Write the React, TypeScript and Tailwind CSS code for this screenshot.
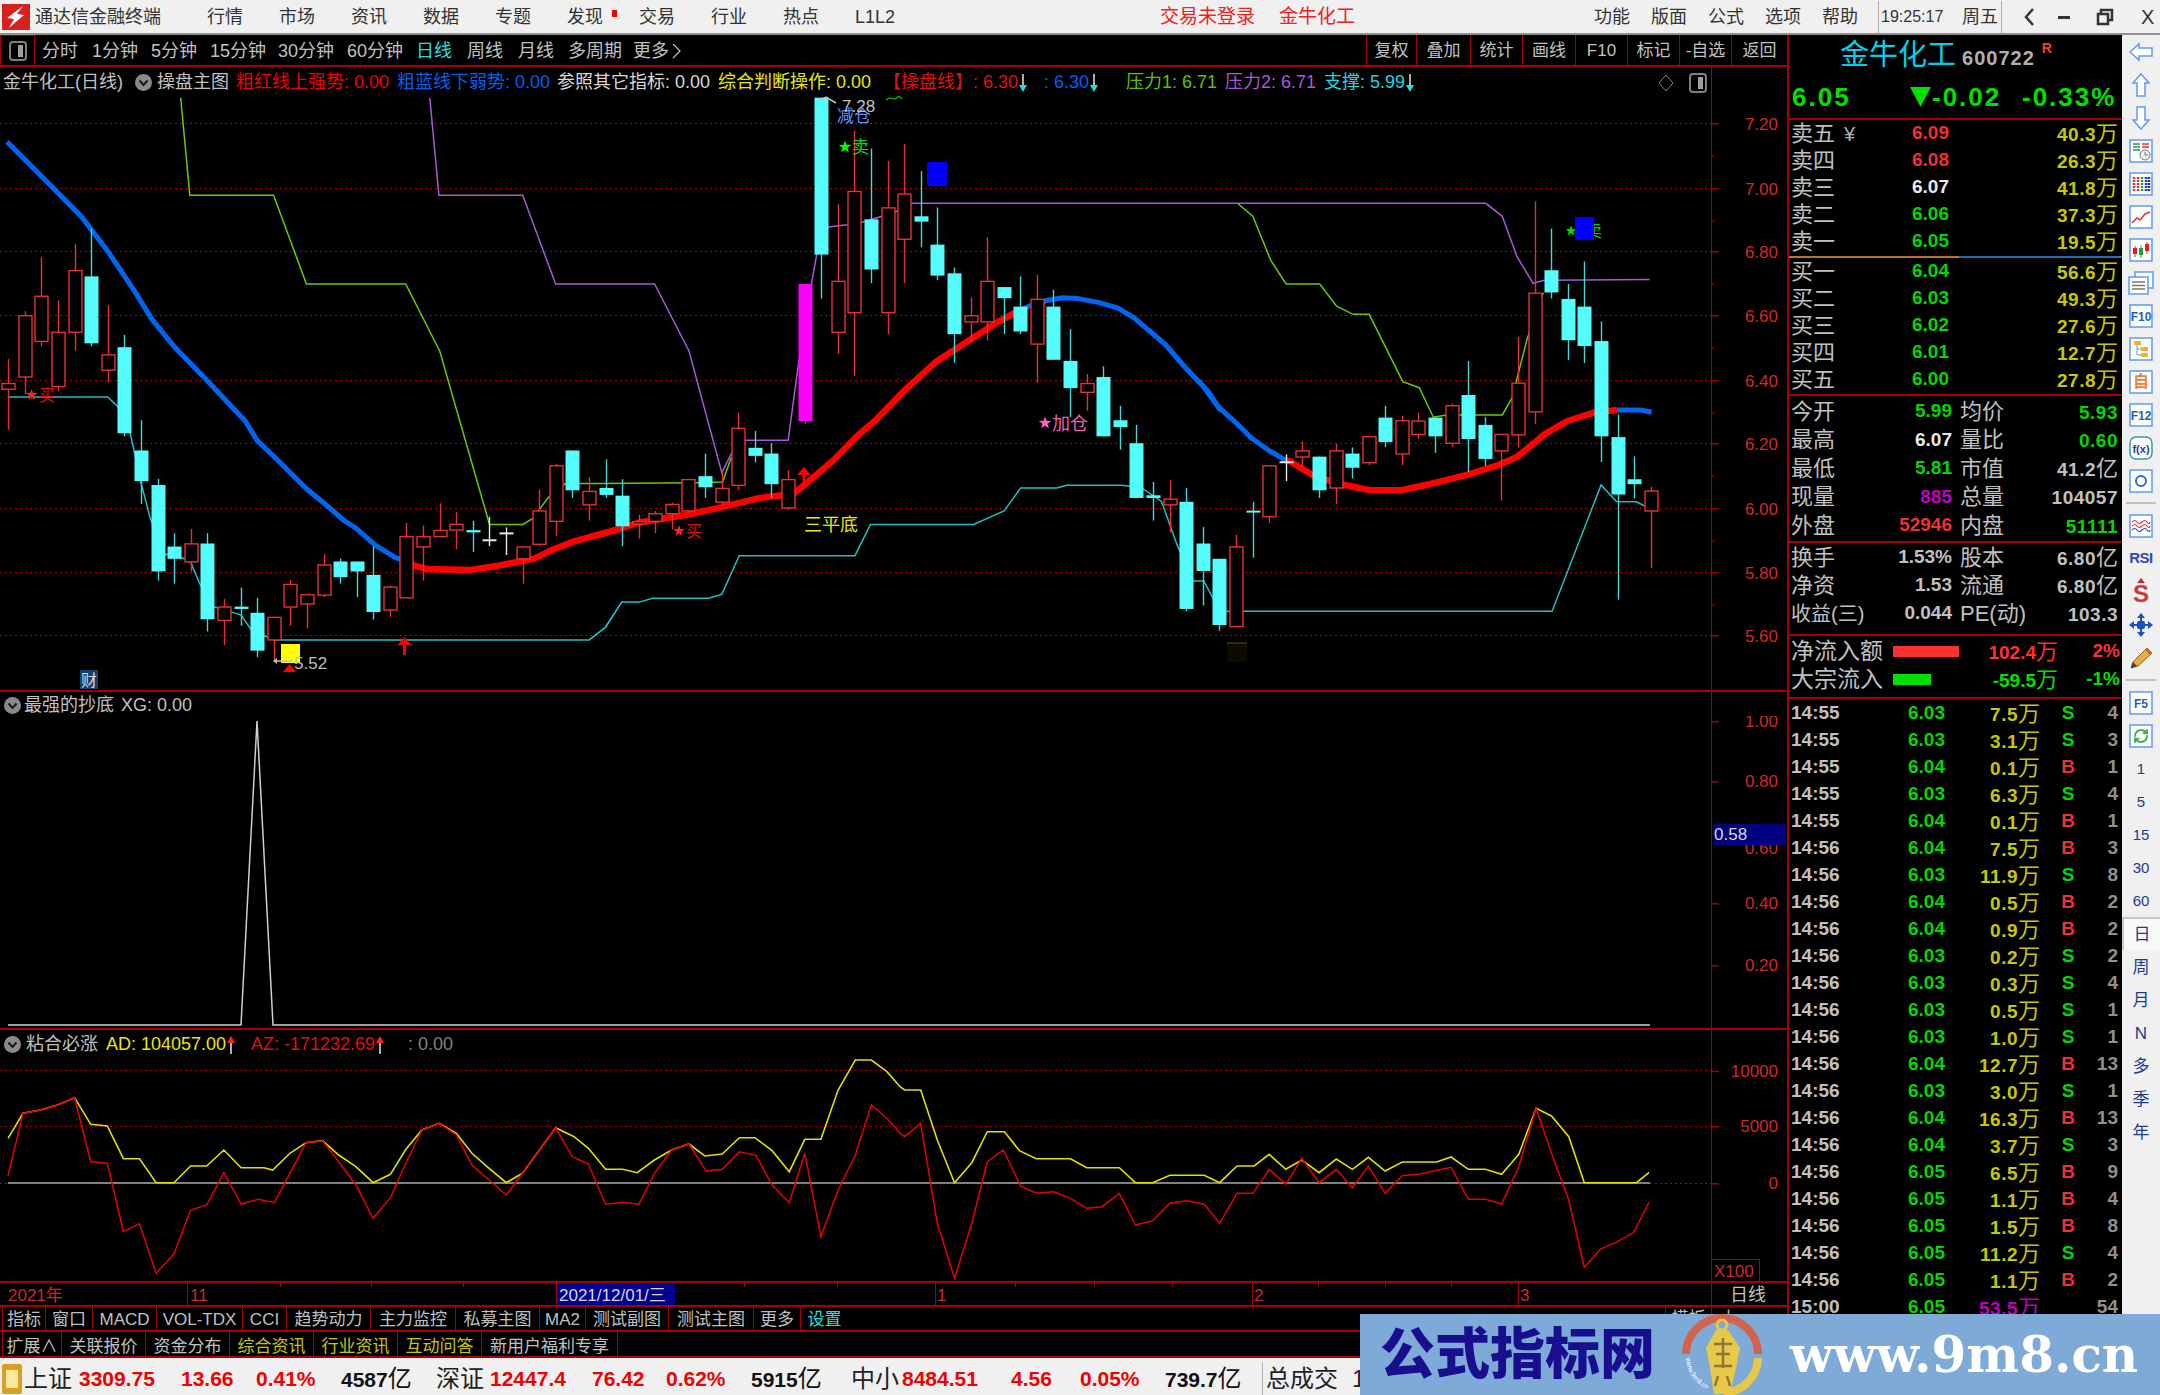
import { RefreshCw } from "lucide-react";
import type { ReactNode } from "react";

// chart coordinates are read off zoomed crops, so keep the crop scale here
const sy = 2.613;
const toPts = (x0: number, sx: number, a: number[]) => {
  const out: string[] = [];
  for (let i = 0; i < a.length; i += 2) {
    out.push(`${(x0 + a[i] / sx).toFixed(1)},${(90 + a[i + 1] / sy).toFixed(1)}`);
  }
  return out.join(" ");
};
const z7 = (a: number[]) => toPts(0, 2.529, a);
const z8 = (a: number[]) => toPts(600, 2.529, a);
const z9 = (a: number[]) => toPts(1200, 2.613, a);
const subA = (a: number[]) => {
  const out: string[] = [];
  for (let i = 0; i < a.length; i += 2) out.push(`${(a[i] / 1.742).toFixed(1)},${(1030 + a[i + 1] / 3).toFixed(1)}`);
  return out.join(" ");
};
const subB = (a: number[]) => {
  const out: string[] = [];
  for (let i = 0; i < a.length; i += 2) out.push(`${(900 + a[i] / 1.742).toFixed(1)},${(1030 + a[i + 1] / 3).toFixed(1)}`);
  return out.join(" ");
};

const candles: [string, number, number, number, number][] = [
  ["r", 767, 782, 703, 888], ["r", 590, 750, 578, 795], ["r", 539, 657, 437, 670], ["r", 633, 775, 550, 787],
  ["r", 472, 633, 402, 681], ["c", 487, 662, 362, 670], ["r", 692, 732, 562, 763], ["c", 672, 897, 640, 905],
  ["c", 942, 1022, 863, 1082], ["c", 1032, 1258, 1016, 1282], ["c", 1193, 1225, 1158, 1290], ["r", 1186, 1233, 1147, 1258],
  ["c", 1185, 1383, 1158, 1415], ["r", 1351, 1386, 1330, 1450], ["c", 1350, 1356, 1300, 1400], ["c", 1366, 1465, 1327, 1482],
  ["r", 1378, 1437, 1378, 1490], ["r", 1292, 1351, 1280, 1400], ["r", 1319, 1343, 1315, 1407], ["r", 1241, 1320, 1213, 1325],
  ["c", 1232, 1273, 1224, 1290], ["c", 1232, 1258, 1232, 1325], ["c", 1267, 1364, 1193, 1384], ["r", 1299, 1359, 1295, 1376],
  ["r", 1167, 1327, 1131, 1327], ["r", 1167, 1194, 1138, 1282], ["r", 1151, 1167, 1080, 1167], ["r", 1135, 1150, 1103, 1200],
  ["c", 1150, 1156, 1126, 1207], ["w", 1174, 1178, 1115, 1192], ["w", 1156, 1160, 1143, 1215], ["r", 1194, 1225, 1194, 1290],
  ["r", 1100, 1187, 1045, 1192], ["r", 982, 1127, 977, 1165], ["c", 942, 1046, 942, 1066], ["r", 1049, 1084, 1012, 1125],
  ["c", 1040, 1058, 965, 1066], ["c", 1060, 1140, 1017, 1192], ["r", 1128, 1134, 1110, 1172], ["r", 1107, 1127, 1100, 1158],
  ["r", 1083, 1107, 1078, 1148], ["r", 1018, 1100, 1018, 1105], ["c", 1009, 1038, 950, 1066], ["r", 1041, 1077, 995, 1085],
  ["r", 884, 1033, 843, 1046], ["c", 935, 956, 891, 973], ["c", 950, 1030, 923, 1066], ["r", 1018, 1092, 993, 1098],
  ["m", 507, 865, 507, 873], ["c", 20, 430, 20, 545], ["r", 500, 633, 298, 690], ["r", 265, 582, 107, 748],
  ["c", 338, 469, 153, 505], ["r", 308, 582, 185, 638], ["r", 272, 390, 141, 505], ["c", 330, 344, 212, 411],
  ["c", 404, 485, 307, 497], ["c", 479, 638, 464, 713], ["r", 590, 606, 542, 660], ["r", 500, 606, 385, 655],
  ["c", 515, 544, 515, 638], ["c", 566, 631, 487, 638], ["r", 547, 664, 483, 765], ["c", 566, 705, 522, 705],
  ["c", 708, 779, 625, 855], ["r", 767, 790, 742, 838], ["c", 750, 905, 722, 905], ["c", 863, 881, 825, 940],
  ["c", 923, 1066, 875, 1066], ["c", 1059, 1066, 1024, 1125], ["r", 1069, 1084, 1020, 1156], ["c", 1076, 1356, 1040, 1362],
  ["c", 1185, 1257, 1142, 1347], ["c", 1225, 1398, 1225, 1413], ["r", 1194, 1402, 1162, 1402], ["c", 1099, 1104, 1076, 1222],
  ["r", 982, 1115, 982, 1132], ["w", 970, 974, 952, 1022], ["r", 943, 959, 918, 985], ["c", 958, 1046, 958, 1066],
  ["r", 943, 1040, 925, 1082], ["c", 950, 987, 934, 1015], ["r", 906, 974, 906, 980], ["c", 856, 920, 825, 933],
  ["r", 864, 951, 852, 980], ["r", 865, 900, 843, 912], ["c", 856, 905, 856, 948], ["r", 825, 923, 820, 933],
  ["c", 797, 912, 708, 998], ["c", 875, 964, 855, 982], ["r", 900, 943, 900, 1073], ["r", 766, 901, 645, 933],
  ["r", 531, 841, 291, 873], ["c", 471, 529, 362, 545], ["c", 546, 654, 507, 706], ["c", 566, 669, 448, 713],
  ["c", 656, 905, 605, 972], ["c", 907, 1057, 848, 1332], ["c", 1017, 1030, 957, 1067], ["r", 1048, 1100, 1037, 1250],
];

const grid = [123.5, 188.5, 251.5, 315.5, 380.5, 443.5, 508.5, 572.5, 635.5];
const priceLabels = ["7.20", "7.00", "6.80", "6.60", "6.40", "6.20", "6.00", "5.80", "5.60"];

const blueLines = [
  z7([18, 135, 140, 262, 205, 330, 275, 425, 340, 525, 385, 600, 440, 670, 520, 755, 570, 810, 620, 865, 650, 915, 700, 965, 775, 1042, 820, 1080, 870, 1125, 900, 1145, 950, 1190, 1000, 1222, 1012, 1226]),
  z8([1050, 582, 1085, 565, 1130, 550, 1170, 543, 1210, 545, 1260, 555, 1310, 570, 1350, 595, 1430, 665, 1480, 725, 1540, 790, 1568, 835]) + " " + z9([0, 763, 50, 830, 100, 875, 135, 910, 180, 942, 225, 968]),
  z9([1090, 836, 1150, 836, 1180, 842]),
];
const redLines = [
  z7([1012, 1226, 1040, 1240, 1080, 1252, 1190, 1254, 1260, 1243, 1350, 1225, 1400, 1200, 1450, 1180, 1520, 1160, 1568, 1147]) + " " + z8([0, 1162, 100, 1130, 220, 1110, 300, 1092, 400, 1067, 490, 1055, 530, 1020, 590, 968, 650, 905, 700, 860, 770, 785, 850, 710, 940, 650, 1000, 610, 1050, 582]),
  z9([225, 968, 235, 970, 300, 1010, 370, 1030, 440, 1045, 525, 1046, 600, 1030, 700, 1005, 780, 980, 830, 958, 900, 900, 960, 865, 1030, 843, 1090, 836]),
];
const greenLines = [
  z7([457, 20, 480, 275, 692, 275, 775, 507, 1026, 507, 1112, 682, 1238, 1135, 1322, 1135, 1347, 1120, 1388, 1063, 1430, 1028, 1568, 1028]) + " " + z8([0, 1028, 240, 1026, 310, 1024, 332, 960]),
  z9([100, 298, 138, 330, 185, 445, 225, 507, 313, 507, 357, 565, 400, 586, 442, 586, 530, 762, 573, 778, 610, 855, 640, 850, 680, 849, 790, 849, 815, 805, 855, 650, 897, 530]),
];
const purpleLine = z7([1087, 20, 1110, 275, 1322, 275, 1405, 507, 1568, 507]) + " " + z8([138, 507, 225, 682, 308, 1000, 332, 950, 367, 915, 476, 915, 500, 730, 535, 505, 548, 430, 578, 358, 625, 352, 660, 346, 745, 320, 785, 296, 1568, 296]) + " " + z9([747, 296, 790, 330, 828, 435, 870, 505, 900, 497, 1175, 495]);
const tealLine = z7([22, 802, 272, 802, 296, 825, 330, 900, 355, 1020, 380, 1120, 414, 1212, 480, 1228, 505, 1290, 540, 1350, 610, 1372, 635, 1410, 692, 1437, 1490, 1437, 1530, 1405, 1568, 1345]) + " " + z8([14, 1405, 55, 1338, 100, 1338, 133, 1328, 275, 1328, 308, 1318, 352, 1217, 645, 1217, 684, 1135, 945, 1135, 1022, 1100, 1064, 1040, 1155, 1040, 1180, 1033, 1320, 1033, 1370, 1040, 1420, 1075, 1460, 1190, 1500, 1283, 1527, 1283]) + " " + z9([35, 1330, 50, 1362, 920, 1362, 1048, 1032, 1088, 1075, 1140, 1076, 1178, 1095]);

const yellowSub = subA([14, 325, 40, 250, 70, 240, 100, 225, 130, 203, 158, 283, 187, 288, 215, 386, 243, 386, 272, 458, 303, 458, 332, 408, 360, 408, 390, 360, 420, 413, 460, 413, 475, 420, 505, 370, 533, 338, 562, 332, 590, 375, 620, 410, 650, 458, 680, 433, 707, 358, 735, 300, 765, 280, 795, 310, 822, 370, 852, 415, 882, 458, 910, 430, 968, 293, 1000, 320, 1025, 355, 1055, 418, 1085, 418, 1110, 428, 1140, 390, 1170, 360, 1200, 342, 1228, 378, 1258, 372, 1288, 323, 1315, 323, 1345, 362, 1375, 425, 1402, 328, 1430, 328, 1460, 180, 1490, 90, 1518, 90, 1545, 125, 1568, 170]) + " " + subB([8, 180, 36, 180, 65, 330, 95, 458, 125, 398, 152, 305, 182, 305, 208, 362, 237, 386, 297, 386, 325, 413, 382, 413, 410, 458, 440, 458, 470, 436, 530, 436, 557, 458, 587, 408, 617, 408, 643, 373, 672, 418, 700, 390, 730, 428, 760, 387, 788, 418, 816, 382, 845, 423, 875, 396, 935, 396, 960, 381, 990, 418, 1020, 418, 1048, 433, 1078, 373, 1108, 235, 1135, 258, 1165, 320, 1192, 458, 1283, 458, 1305, 427]);
const redSub = subA([14, 438, 40, 250, 70, 240, 100, 225, 130, 203, 158, 395, 187, 400, 215, 605, 243, 581, 272, 730, 303, 672, 332, 540, 360, 525, 390, 428, 420, 522, 450, 508, 478, 518, 505, 430, 533, 338, 562, 332, 590, 395, 620, 465, 650, 565, 680, 503, 707, 400, 735, 300, 765, 280, 795, 315, 822, 405, 852, 450, 882, 495, 910, 430, 968, 293, 997, 380, 1025, 402, 1055, 523, 1085, 517, 1113, 523, 1140, 430, 1170, 360, 1200, 342, 1230, 423, 1258, 418, 1288, 365, 1317, 376, 1345, 465, 1375, 518, 1402, 370, 1430, 620, 1460, 480, 1490, 375, 1518, 225, 1545, 265, 1568, 310]) + " " + subB([8, 320, 36, 280, 65, 580, 95, 745, 125, 580, 152, 395, 180, 360, 210, 468, 237, 490, 268, 485, 297, 505, 325, 535, 352, 530, 382, 490, 410, 585, 440, 572, 470, 520, 500, 512, 530, 523, 557, 580, 587, 490, 615, 490, 643, 418, 672, 463, 700, 385, 730, 458, 760, 418, 788, 473, 816, 408, 845, 490, 875, 437, 905, 432, 960, 412, 990, 508, 1020, 508, 1048, 522, 1078, 410, 1108, 235, 1135, 370, 1165, 510, 1192, 712, 1220, 658, 1250, 635, 1278, 607, 1305, 517]);

const periods = [
  { t: "分时", w: "w-[50px]" }, { t: "1分钟", w: "w-[59px]" }, { t: "5分钟", w: "w-[59px]" }, { t: "15分钟", w: "w-[68px]" },
  { t: "30分钟", w: "w-[69px]" }, { t: "60分钟", w: "w-[69px]" }, { t: "日线", w: "w-[51px] text-[#22e0e0]" }, { t: "周线", w: "w-[51px]" },
  { t: "月线", w: "w-[50px]" }, { t: "多周期", w: "w-[65px]" },
];
const tools = [
  { t: "复权", w: "w-[50px]" }, { t: "叠加", w: "w-[54px]" }, { t: "统计", w: "w-[52px]" }, { t: "画线", w: "w-[53px]" },
  { t: "F10", w: "w-[52px]" }, { t: "标记", w: "w-[52px]" }, { t: "-自选", w: "w-[52px]" }, { t: "返回", w: "w-[56px]" },
];
const menus = ["行情", "市场", "资讯", "数据", "专题", "发现", "交易", "行业", "热点", "L1L2"];
const rightMenus = ["功能", "版面", "公式", "选项", "帮助"];

const asks = [
  ["卖五", "6.09", "40.3", "text-[#f03030]"], ["卖四", "6.08", "26.3", "text-[#f03030]"], ["卖三", "6.07", "41.8", "text-[#e8e8e8]"],
  ["卖二", "6.06", "37.3", "text-[#00d800]"], ["卖一", "6.05", "19.5", "text-[#00d800]"],
];
const bids = [
  ["买一", "6.04", "56.6"], ["买二", "6.03", "49.3"], ["买三", "6.02", "27.6"], ["买四", "6.01", "12.7"], ["买五", "6.00", "27.8"],
];
const quoteA = [
  ["今开", "5.99", "text-[#00d800]", "均价", "5.93", "", "text-[#00d800]"],
  ["最高", "6.07", "text-[#e8e8e8]", "量比", "0.60", "", "text-[#00d800]"],
  ["最低", "5.81", "text-[#00d800]", "市值", "41.2", "亿", "text-[#c0c0c0]"],
  ["现量", "885", "text-[#c000c0]", "总量", "104057", "", "text-[#c0c0c0]"],
  ["外盘", "52946", "text-[#f03030]", "内盘", "51111", "", "text-[#00d800]"],
];
const quoteB = [
  ["换手", "1.53%", "股本", "6.80", "亿"],
  ["净资", "1.53", "流通", "6.80", "亿"],
  ["收益(三)", "0.044", "PE(动)", "103.3", ""],
];
const trades: [string, string, string, string, string][] = [
  ["14:55", "6.03", "7.5", "S", "4"], ["14:55", "6.03", "3.1", "S", "3"], ["14:55", "6.04", "0.1", "B", "1"], ["14:55", "6.03", "6.3", "S", "4"],
  ["14:55", "6.04", "0.1", "B", "1"], ["14:56", "6.04", "7.5", "B", "3"], ["14:56", "6.03", "11.9", "S", "8"], ["14:56", "6.04", "0.5", "B", "2"],
  ["14:56", "6.04", "0.9", "B", "2"], ["14:56", "6.03", "0.2", "S", "2"], ["14:56", "6.03", "0.3", "S", "4"], ["14:56", "6.03", "0.5", "S", "1"],
  ["14:56", "6.03", "1.0", "S", "1"], ["14:56", "6.04", "12.7", "B", "13"], ["14:56", "6.03", "3.0", "S", "1"], ["14:56", "6.04", "16.3", "B", "13"],
  ["14:56", "6.04", "3.7", "S", "3"], ["14:56", "6.05", "6.5", "B", "9"], ["14:56", "6.05", "1.1", "B", "4"], ["14:56", "6.05", "1.5", "B", "8"],
  ["14:56", "6.05", "11.2", "S", "4"], ["14:56", "6.05", "1.1", "B", "2"], ["15:00", "6.05", "53.5", "", "54"],
];
const tabsA = [
  { t: "指标", w: "w-[43px]" }, { t: "窗口", w: "w-[47px]" }, { t: "MACD", w: "w-[64px]" }, { t: "VOL-TDX", w: "w-[86px]" }, { t: "CCI", w: "w-[44px]" },
  { t: "趋势动力", w: "w-[84px]" }, { t: "主力监控", w: "w-[85px]" }, { t: "私募主图", w: "w-[84px]" }, { t: "MA2", w: "w-[46px]" },
  { t: "测试副图", w: "w-[83px]" }, { t: "测试主图", w: "w-[85px]" }, { t: "更多", w: "w-[47px]" }, { t: "设置", w: "w-[48px] text-[#22e0e0]" },
];
const tabsB = [
  { t: "扩展∧", w: "w-[59px]" }, { t: "关联报价", w: "w-[84px]" }, { t: "资金分布", w: "w-[84px]" }, { t: "综合资讯", w: "w-[84px] text-[#c8c800]" },
  { t: "行业资讯", w: "w-[84px] text-[#c8c800]" }, { t: "互动问答", w: "w-[84px] text-[#c8c800]" }, { t: "新用户福利专享", w: "w-[137px]" },
];

const Star = ({ x, y, r, fill }: { x: number; y: number; r: number; fill: string }) => {
  const p: string[] = [];
  for (let i = 0; i < 10; i++) {
    const a = -Math.PI / 2 + (i * Math.PI) / 5;
    const rr = i % 2 ? r * 0.42 : r;
    p.push(`${(x + rr * Math.cos(a)).toFixed(1)},${(y + rr * Math.sin(a)).toFixed(1)}`);
  }
  return <polygon points={p.join(" ")} fill={fill} />;
};

const UpMark = ({ x, y }: { x: number; y: number }) => (
  <g fill="#ff0000">
    <polygon points={`${x},${y} ${x + 7},${y + 8} ${x - 7},${y + 8}`} />
    <rect x={x - 1.5} y={y + 8} width={3} height={10} />
  </g>
);

const Dotted = ({ y }: { y: number }) => (
  <line x1={0} x2={1711} y1={y} y2={y} stroke="#c00000" strokeWidth={1} strokeDasharray="2 3" shapeRendering="crispEdges" />
);

const MainChart = () => (
  <svg width={1787} height={594} viewBox="0 96 1787 594" className="block">
    {grid.map((y) => (
      <Dotted key={y} y={y} />
    ))}
    <polyline points={greenLines[0]} fill="none" stroke="#66cc00" strokeWidth={1.5} />
    <polyline points={greenLines[1]} fill="none" stroke="#66cc00" strokeWidth={1.5} />
    <polyline points={purpleLine} fill="none" stroke="#a858d8" strokeWidth={1.5} />
    <polyline points={tealLine} fill="none" stroke="#20c0c8" strokeWidth={1.5} />
    {blueLines.map((p, i) => (
      <polyline key={i} points={p} fill="none" stroke="#0066f0" strokeWidth={5} strokeLinejoin="round" />
    ))}
    {redLines.map((p, i) => (
      <polyline key={i} points={p} fill="none" stroke="#ff0000" strokeWidth={6.5} strokeLinejoin="round" />
    ))}
    {candles.map(([t, top, bot, hi, lo], i) => {
      const x = Math.round(8.3 + 16.59 * i) + 0.5;
      const y = (v: number) => 90 + v / sy;
      const color = t === "r" ? "#e83030" : t === "w" ? "#e8e8e8" : t === "m" ? "#ff00ff" : "#54fcfc";
      const wick = t === "c" ? "#40d8d8" : color;
      return (
        <g key={i}>
          <line x1={x} x2={x} y1={y(hi)} y2={y(lo)} stroke={wick} strokeWidth={1.4} />
          {t === "r" ? (
            <rect x={x - 6.5} y={y(top)} width={13} height={y(bot) - y(top)} fill="#000" stroke={color} strokeWidth={1.4} />
          ) : (
            <rect x={x - 7} y={y(top)} width={14} height={Math.max(y(bot) - y(top), 2)} fill={color} />
          )}
        </g>
      );
    })}
    <rect x={1711} y={96} width={1} height={594} fill="#a80000" />
    {grid.map((y, i) => (
      <g key={y}>
        <rect x={1711} y={y - 0.5} width={8} height={1.5} fill="#a80000" />
        {i < 8 && <rect x={1711} y={y + 32} width={4} height={1} fill="#a80000" />}
        <text x={1778} y={y + 6} textAnchor="end" fontSize={17} fill="#d02828">{priceLabels[i]}</text>
      </g>
    ))}

    {/* signal marks */}
    <Star x={31.6} y={395} r={6} fill="#ff2020" />
    <text x={39} y={401} fontSize={16} fill="#e01010">买</text>
    <Star x={679} y={531} r={6} fill="#ff2020" />
    <text x={686} y={537} fontSize={16} fill="#e01010">买</text>
    <rect x={281} y={644} width={19} height={19} fill="#ffff00" />
    <line x1={274} x2={292} y1={661} y2={661} stroke="#c0c0c0" strokeWidth={1.5} />
    <polygon points="273,661 277,658 277,664" fill="#c0c0c0" />
    <text x={294} y={669} fontSize={17} fill="#c0c0c0">5.52</text>
    <polygon points="289.5,664 296,672 283,672" fill="#ff0000" />
    <UpMark x={404.5} y={637} />
    <UpMark x={804} y={467} />
    <rect x={80} y={670} width={18} height={19} fill="#16406e" />
    <text x={81} y={686} fontSize={16} fill="#d8d8d8">财</text>
    <text x={804} y={531} fontSize={18} fill="#e8e800">三平底</text>
    <rect x={927} y={162} width={20} height={24} fill="#0000ff" />
    <text x={837} y={122} fontSize={17} fill="#6090f0">减仓</text>
    <polyline points="822,99 826,97 836,103" fill="none" stroke="#c0c0c0" strokeWidth={1.5} />
    <text x={842} y={112} fontSize={17} fill="#c0c0c0">7.28</text>
    <polyline points="886,100 890,98 895,99 899,96 902,99" fill="none" stroke="#00c000" strokeWidth={1.2} />
    <Star x={845} y={147} r={6.5} fill="#00ff00" />
    <text x={852} y={153} fontSize={17} fill="#00e000">卖</text>
    <Star x={1045} y={423} r={6.5} fill="#ff60c0" />
    <text x={1052} y={430} fontSize={18} fill="#f060b0">加仓</text>
    <Star x={1571} y={231} r={5.5} fill="#00e000" />
    <text x={1585} y={237} fontSize={17} fill="#00d800">卖</text>
    <rect x={1575} y={217} width={19} height={23} fill="#0000ff" />
    <rect x={1227} y={643} width={20} height={19} fill="#0b0b00" />
    <line x1={1227} x2={1247} y1={643} y2={643} stroke="#5a5400" strokeWidth={1} />
  </svg>
);

const SpikeChart = () => (
  <svg width={1787} height={312} viewBox="0 716 1787 312" className="block">
    <polyline points="8,1025 241,1025 257,721 273,1025 1650,1025" fill="none" stroke="#d0d0d0" strokeWidth={1.5} />
    <rect x={1711} y={716} width={1} height={312} fill="#a80000" />
    {[
      [721, "1.00"],
      [781, "0.80"],
      [903, "0.40"],
      [965, "0.20"],
    ].map(([y, t]) => (
      <g key={t}>
        <rect x={1711} y={Number(y)} width={8} height={1.5} fill="#a80000" />
        <text x={1778} y={Number(y) + 6} textAnchor="end" fontSize={17} fill="#d02828">{t}</text>
      </g>
    ))}
    <text x={1778} y={854} textAnchor="end" fontSize={17} fill="#d02828">0.60</text>
    <rect x={1713} y={824} width={73} height={21} fill="#000080" />
    <text x={1714} y={840} fontSize={17} fill="#d8d8d8">0.58</text>
  </svg>
);

const OscChart = () => (
  <svg width={1787} height={224} viewBox="0 1058 1787 224" className="block">
    {[1070.5, 1126.5, 1183.5].map((y) => (
      <Dotted key={y} y={y} />
    ))}
    <line x1={8} x2={1650} y1={1183} y2={1183} stroke="#808080" strokeWidth={2} />
    <polyline points={yellowSub} fill="none" stroke="#e0e000" strokeWidth={1.6} />
    <polyline points={redSub} fill="none" stroke="#e80000" strokeWidth={1.5} />
    <rect x={1711} y={1058} width={1} height={224} fill="#a80000" />
    {[
      [1070.7, "10000"],
      [1126, "5000"],
      [1183, "0"],
    ].map(([y, t]) => (
      <g key={t}>
        <rect x={1711} y={Number(y)} width={8} height={1.5} fill="#a80000" />
        <text x={1778} y={Number(y) + 6} textAnchor="end" fontSize={17} fill="#d02828">{t}</text>
      </g>
    ))}
    <rect x={1711.5} y={1259.5} width={48} height={22} fill="#000" stroke="#a80000" />
    <text x={1714} y={1277} fontSize={17} fill="#d02828">X100</text>
  </svg>
);

const DateAxis = () => (
  <svg width={1787} height={22} viewBox="0 1283 1787 22" className="block">
    <text x={8} y={1301} fontSize={17} fill="#d02828">2021年</text>
    {[187, 556, 935, 1252, 1518].map((x) => (
      <rect key={x} x={x} y={1283} width={1} height={22} fill="#a80000" />
    ))}
    {[280, 371, 463, 744, 837, 1015, 1094, 1172, 1318, 1385, 1451].map((x) => (
      <rect key={x} x={x} y={1283} width={1} height={4} fill="#a80000" />
    ))}
    <text x={190} y={1301} fontSize={17} fill="#d02828">11</text>
    <rect x={557} y={1283} width={118} height={22} fill="#000090" />
    <text x={559} y={1301} fontSize={17} fill="#d8d8d8">2021/12/01/三</text>
    <text x={937} y={1301} fontSize={17} fill="#d02828">1</text>
    <text x={1254} y={1301} fontSize={17} fill="#d02828">2</text>
    <text x={1520} y={1301} fontSize={17} fill="#d02828">3</text>
    <rect x={1711} y={1283} width={1} height={22} fill="#a80000" />
    <text x={1730} y={1301} fontSize={18} fill="#c0c0c0">日线</text>
  </svg>
);

const Chevron = () => (
  <svg width={17} height={17} viewBox="0 0 17 17" className="shrink-0">
    <circle cx={8.5} cy={8.5} r={8.5} fill="#8a8a8a" />
    <polyline points="4.5,6.5 8.5,11 12.5,6.5" fill="none" stroke="#1a1a1a" strokeWidth={2} />
  </svg>
);

const DownTick = () => (
  <svg width={10} height={20} viewBox="0 0 10 20" className="inline-block align-middle">
    <line x1={5} x2={5} y1={1} y2={14} stroke="#e8e8e8" strokeWidth={1.5} />
    <polygon points="1,12 9,12 5,19" fill="#20e0e8" />
  </svg>
);

const UpTick = () => (
  <svg width={10} height={20} viewBox="0 0 10 20" className="inline-block align-middle">
    <line x1={5} x2={5} y1={6} y2={19} stroke="#e8e8e8" strokeWidth={1.5} />
    <polygon points="1,8 9,8 5,1" fill="#ff2020" />
  </svg>
);

const PanelIcon = () => (
  <svg width={18} height={20} viewBox="0 0 18 20">
    <rect x={1} y={1} width={16} height={18} rx={3} fill="none" stroke="#808080" strokeWidth={2} />
    <rect x={9} y={4} width={5} height={12} fill="#a0a0a0" />
  </svg>
);

const Box = ({ children }: { children: ReactNode }) => (
  <svg width={24} height={24} viewBox="0 0 24 24">
    <rect x={1} y={1} width={22} height={22} fill="#fff" stroke="#5b9bf0" strokeWidth={1.5} />
    {children}
  </svg>
);

const BoxText = ({ t, size = 12, fill = "#2060c0" }: { t: string; size?: number; fill?: string }) => (
  <text x={12} y={16.5} textAnchor="middle" fontSize={size} fill={fill} fontWeight={700}>{t}</text>
);

const sideTop: ReactNode[] = [
  <svg width={24} height={20} viewBox="0 0 24 20"><polygon points="1,10 10,2 10,6 23,6 23,14 10,14 10,18" fill="#fff" stroke="#5b9bf0" strokeWidth={1.5} /></svg>,
  <svg width={20} height={24} viewBox="0 0 20 24"><polygon points="10,1 18,10 14,10 14,23 6,23 6,10 2,10" fill="#fff" stroke="#5b9bf0" strokeWidth={1.5} /></svg>,
  <svg width={20} height={24} viewBox="0 0 20 24"><polygon points="10,23 18,14 14,14 14,1 6,1 6,14 2,14" fill="#fff" stroke="#5b9bf0" strokeWidth={1.5} /></svg>,
  <Box>
    <path d="M4 5h7M4 8h7M4 11h7" stroke="#20a040" strokeWidth={1.5} />
    <path d="M13 5h7M13 8h7" stroke="#e03030" strokeWidth={1.5} />
    <circle cx={16} cy={16} r={5} fill="#eee" stroke="#777" />
    <path d="M16 13v3h3" fill="none" stroke="#777" />
  </Box>,
  <Box>
    <path d="M5 5v14M9 5v14" stroke="#e03030" strokeWidth={2.5} strokeDasharray="2 1" />
    <path d="M13 5v14" stroke="#20a040" strokeWidth={2.5} strokeDasharray="2 1" />
    <path d="M17 5v14M20 5v14" stroke="#2030c0" strokeWidth={2.5} strokeDasharray="2 1" />
  </Box>,
  <Box><polyline points="3,18 8,13 11,15 16,9 21,7" fill="none" stroke="#e03030" strokeWidth={1.5} /></Box>,
  <Box>
    <path d="M6 8v11" stroke="#e02020" /><rect x={4} y={10} width={4} height={6} fill="#e02020" />
    <path d="M12 7v13" stroke="#20a040" /><rect x={10} y={10} width={4} height={7} fill="#20a040" />
    <path d="M18 4v12" stroke="#e02020" /><rect x={16} y={6} width={4} height={7} fill="#e02020" />
  </Box>,
  <svg width={26} height={24} viewBox="0 0 26 24">
    <rect x={7} y={1} width={18} height={16} fill="#fff" stroke="#5b9bf0" strokeWidth={1.5} />
    <rect x={1} y={6} width={19} height={17} fill="#fff" stroke="#5b9bf0" strokeWidth={1.5} />
    <path d="M4 11h13M4 14.5h13M4 18h13" stroke="#777" strokeWidth={1.5} />
  </svg>,
  <Box><BoxText t="F10" /></Box>,
  <Box>
    <rect x={5} y={4} width={7} height={4} fill="#f0b030" />
    <path d="M8 8v10h4M8 12h4" fill="none" stroke="#5b9bf0" />
    <rect x={12} y={10} width={7} height={4} fill="#f0b030" />
    <rect x={12} y={16} width={7} height={4} fill="#f0b030" />
  </Box>,
  <Box><BoxText t="自" size={16} fill="#f08040" /></Box>,
  <Box><BoxText t="F12" /></Box>,
  <svg width={24} height={24} viewBox="0 0 24 24">
    <rect x={1} y={1} width={22} height={22} rx={6} fill="#fff" stroke="#30a0a0" strokeWidth={1.5} />
    <text x={12} y={16.5} textAnchor="middle" fontSize={11} fill="#2040a0" fontWeight={700}>f(x)</text>
  </svg>,
  <Box><circle cx={12} cy={12} r={5} fill="none" stroke="#2070d0" strokeWidth={2} /></Box>,
];

const sideMid: ReactNode[] = [
  <Box>
    <path d="M3 8q3-3 5 0t5 0 5 0 3 0" fill="none" stroke="#e03030" strokeWidth={1.2} />
    <path d="M3 12q3-3 5 0t5 0 5 0 3 0" fill="none" stroke="#e03030" strokeWidth={1.2} />
    <path d="M3 16q3-3 5 0t5 0 5 0 3 0" fill="none" stroke="#3040c0" strokeWidth={1.2} />
  </Box>,
  <span className="text-[15px] font-bold text-[#3048b8] tracking-[-0.5px]">RSI</span>,
  <svg width={24} height={28} viewBox="0 0 24 28">
    <polygon points="12,0 16,5 8,5" fill="#c03030" />
    <text x={12} y={24} textAnchor="middle" fontSize={24} fontWeight={700} fill="#d03030" stroke="#a0a0a0" strokeWidth={0.4}>S</text>
  </svg>,
  <svg width={26} height={26} viewBox="0 0 26 26" fill="#1850c8">
    <polygon points="13,1 17,6 9,6" /><polygon points="13,25 17,20 9,20" /><polygon points="1,13 6,9 6,17" /><polygon points="25,13 20,9 20,17" />
    <rect x={9} y={9} width={8} height={8} rx={2} /><path d="M6 12h14v2H6zM12 6h2v14h-2z" />
  </svg>,
  <svg width={26} height={26} viewBox="0 0 26 26">
    <polygon points="3,23 5,17 19,3 24,8 10,21" fill="#e8b040" stroke="#806020" />
    <polygon points="19,3 24,8 22,10 17,5" fill="#d06040" />
    <polygon points="3,23 5,17 9,21" fill="#444" />
  </svg>,
];

const sideNums = ["1", "5", "15", "30", "60"];
const sideKinds = ["周", "月", "N", "多", "季", "年"];

const Wan = ({ n, color = "text-[#c8c800]" }: { n: string; color?: string }) => (
  <span className={color}>
    <span className="font-bold text-[19px] tracking-[0.5px]">{n}</span>
    <span className="text-[22px]">万</span>
  </span>
);

export default function App() {
  return (
    <div className="relative w-[2160px] h-[1395px] overflow-hidden bg-[#f0f0f0] text-[#c0c0c0] [font-family:'Liberation_Sans','Noto_Sans_CJK_SC',sans-serif]">
      {/* title bar */}
      <div className="flex items-center h-[33px] pt-[1px] text-[#333] text-[18px]">
        <svg width={28} height={26} viewBox="0 0 28 26" className="ml-[2px] shrink-0">
          <rect width={28} height={26} fill="#d8201c" />
          <path d="M21 2 5 14l7 1-5 9 15-13-7-1z" fill="#fff" />
        </svg>
        <span className="ml-[5px] w-[172px] shrink-0">通达信金融终端</span>
        {menus.map((m) => (
          <span key={m} className="relative w-[72px] shrink-0">
            {m}
            {m === "发现" && <span className="absolute left-[45px] top-[6px] w-[5px] h-[7px] bg-[#f00000]" />}
          </span>
        ))}
        <span className="ml-[233px] w-[119px] text-[#f02020] text-[19px] shrink-0">交易未登录</span>
        <span className="text-[#f02020] text-[19px] shrink-0 w-[315px]">金牛化工</span>
        {rightMenus.map((m) => (
          <span key={m} className="w-[57px] shrink-0">{m}</span>
        ))}
        <span className="flex items-center h-full border-l border-r border-[#b0b0b0] ml-[-1px] px-[2px] w-[124px] shrink-0">
          <span className="text-[16px] w-[81px]">19:25:17</span>
          <span>周五</span>
        </span>
        <div className="flex items-center ml-[20px] gap-[19px]">
          <svg width={14} height={20} viewBox="0 0 14 20"><polyline points="11,2 4,10 11,18" fill="none" stroke="#333" strokeWidth={2.5} /></svg>
          <span className="w-[12px] h-[3px] bg-[#333] mx-[3px]" />
          <svg width={18} height={18} viewBox="0 0 18 18" className="mx-[4px]">
            <rect x={5} y={2} width={11} height={10} fill="none" stroke="#333" strokeWidth={2.5} />
            <rect x={2} y={6} width={10} height={10} fill="#f0f0f0" stroke="#333" strokeWidth={2.5} />
          </svg>
          <span className="text-[20px] leading-none ml-[4px]">X</span>
        </div>
      </div>
      <div className="h-[2px] bg-[#909090]" />

      <div className="flex h-[1323px] items-start">
        {/* charts column */}
        <div className="w-[1787px] shrink-0 h-full bg-black overflow-hidden">
          <div className="flex items-center h-[32px] border-b-2 border-[#a80000] text-[18px]">
            <div className="flex items-center justify-center w-[35px] h-full border-x border-t border-[#a80000] mr-[7px]">
              <PanelIcon />
            </div>
            {periods.map((p) => (
              <span key={p.t} className={`${p.w} shrink-0 pt-[2px]`}>{p.t}</span>
            ))}
            <span className="flex items-center gap-[3px] pt-[2px]">
              更多
              <svg width={9} height={18} viewBox="0 0 9 18"><polyline points="1,2 8,9 1,16" fill="none" stroke="#c0c0c0" strokeWidth={1.2} /></svg>
            </span>
            <div className="flex ml-auto h-full">
              {tools.map((t) => (
                <span key={t.t} className={`${t.w} flex items-center justify-center border-l border-[#a80000] text-[17px] pt-[2px]`}>{t.t}</span>
              ))}
            </div>
          </div>

          {/* legend above the main chart */}
          <div className="flex items-center w-[1712px] h-[29px] pt-[2px] border-r border-[#a80000] text-[18px] pl-[3px] whitespace-nowrap">
            <span className="w-[132px] shrink-0">金牛化工(日线)</span>
            <span className="w-[22px] shrink-0"><Chevron /></span>
            <span className="w-[79px] shrink-0">操盘主图</span>
            <span className="w-[161px] shrink-0 text-[#f00000]">粗红线上强势: 0.00</span>
            <span className="w-[160px] shrink-0 text-[#0060f0]">粗蓝线下弱势: 0.00</span>
            <span className="w-[161px] shrink-0 text-[#d8d8d8]">参照其它指标: 0.00</span>
            <span className="w-[165px] shrink-0 text-[#e8e800]">综合判断操作: 0.00</span>
            <span className="w-[161px] shrink-0 text-[#e01010]">【操盘线】: 6.30<DownTick /></span>
            <span className="w-[82px] shrink-0 text-[#0060f0]">: 6.30<DownTick /></span>
            <span className="w-[99px] shrink-0 text-[#60c000]">压力1: 6.71</span>
            <span className="w-[99px] shrink-0 text-[#a858d8]">压力2: 6.71</span>
            <span className="shrink-0 text-[#20d8e0]">支撑: 5.99<DownTick /></span>
            <div className="flex items-center gap-[14px] ml-auto pr-[4px]">
              <svg width={18} height={18} viewBox="0 0 18 18"><polygon points="9,1 16,9 9,17 2,9" fill="none" stroke="#808080" /></svg>
              <PanelIcon />
            </div>
          </div>
          <div className="h-[596px] border-b-2 border-[#a80000]">
            <MainChart />
          </div>

          <div className="flex items-center w-[1712px] h-[24px] pt-[2px] border-r border-[#a80000] pl-[4px] gap-[3px] text-[18px]">
            <Chevron />
            <span>最强的抄底</span>
            <span className="ml-[4px]">XG: 0.00</span>
          </div>
          <div className="h-[314px] border-b-2 border-[#a80000]">
            <SpikeChart />
          </div>

          <div className="flex items-center w-[1712px] h-[28px] border-r border-[#a80000] pl-[4px] text-[18px] whitespace-nowrap">
            <Chevron />
            <span className="ml-[5px] w-[80px] shrink-0">粘合必涨</span>
            <span className="w-[145px] shrink-0 text-[#e8e800]">AD: 104057.00<UpTick /></span>
            <span className="w-[157px] shrink-0 text-[#e01010]">AZ: -171232.69<UpTick /></span>
            <span className="text-[#808080]">: 0.00</span>
          </div>
          <div className="h-[225px] border-b-2 border-[#a80000]">
            <OscChart />
          </div>

          <div className="h-[24px] border-b-2 border-[#a80000]">
            <DateAxis />
          </div>

          <div className="flex h-[25px] border-b-2 border-[#a80000] pl-[2px] text-[17px]">
            {tabsA.map((t) => (
              <span key={t.t} className={`${t.w} flex items-center justify-center border-l border-[#a80000] last:border-r pt-[3px]`}>{t.t}</span>
            ))}
            <span className="ml-[817px] w-[46px] flex items-center justify-center border-l border-[#a80000]">模板</span>
            <span className="w-[35px] flex items-center justify-center border-l border-[#a80000]">上</span>
          </div>
          <div className="flex h-[26px] border-b-2 border-[#a80000] pl-[2px] text-[17px]">
            {tabsB.map((t) => (
              <span key={t.t} className={`${t.w} flex items-center justify-center border-l border-[#a80000] last:border-r whitespace-nowrap pt-[5px]`}>{t.t}</span>
            ))}
          </div>
        </div>

        {/* quote panel */}
        <div className="w-[335px] shrink-0 h-full bg-black border-l-2 border-[#a80000] overflow-hidden text-[22px]">
          <div className="flex items-center h-[41px] pl-[51px]">
            <span className="text-[29px] text-[#00d0e8] leading-none">金牛化工</span>
            <span className="ml-[6px] text-[20px] font-bold tracking-[1px] text-[#b0b0b0] mt-[5px]">600722</span>
            <span className="ml-[7px] text-[14px] font-bold text-[#f04040] mb-[14px]">R</span>
          </div>
          <div className="flex items-center h-[44px] border-b-2 border-[#a80000] text-[26px] font-bold tracking-[2px] text-[#00e000]">
            <span className="w-[121px] pl-[3px]">6.05</span>
            <svg width={21} height={20} viewBox="0 0 21 20"><polygon points="0,0 21,0 10.5,20" fill="#00e000" /></svg>
            <span className="w-[90px] ml-[1px]">-0.02</span>
            <span>-0.33%</span>
          </div>
          {asks.map(([l, p, v, c], i) => (
            <div key={l} className="flex items-center h-[27px] pl-[2px]">
              <span className="w-[53px]">{l}</span>
              <span className="w-[68px] text-[#b0b0b0] text-[20px]">{i === 0 ? "¥" : ""}</span>
              <span className={`w-[40px] font-bold text-[19px] ${c}`}>{p}</span>
              <span className="ml-auto pr-[4px]"><Wan n={v} /></span>
            </div>
          ))}
          <div className="flex h-[2px] mt-[1px]">
            <span className="w-[170px] bg-[#b07820]" />
            <span className="flex-1 bg-[#2070b0]" />
          </div>
          {bids.map(([l, p, v]) => (
            <div key={l} className="flex items-center h-[27px] pl-[2px]">
              <span className="w-[121px]">{l}</span>
              <span className="w-[40px] font-bold text-[19px] text-[#00d800]">{p}</span>
              <span className="ml-auto pr-[4px]"><Wan n={v} /></span>
            </div>
          ))}
          <div className="h-[2px] bg-[#a80000] mt-[1px] mb-[1px]" />
          {quoteA.map(([a, b, c, d, e, u, f]) => (
            <div key={a} className="flex items-center h-[28.5px] pl-[2px] pr-[4px]">
              <span className="w-[50px] shrink-0">{a}</span>
              <span className={`w-[111px] shrink-0 text-right font-bold text-[19px] ${c}`}>{b}</span>
              <span className="ml-[8px]">{d}</span>
              <span className={`ml-auto ${f}`}>
                <span className="font-bold text-[19px] tracking-[0.5px]">{e}</span>
                {u && <span className="text-[22px]">{u}</span>}
              </span>
            </div>
          ))}
          <div className="h-[2px] bg-[#a80000] mt-[1px] mb-[1px]" />
          {quoteB.map(([a, b, c, d, u], i) => (
            <div key={a} className="flex items-center h-[28px] pl-[2px] pr-[4px] whitespace-nowrap">
              <span className={`w-[50px] shrink-0 ${i === 2 ? "text-[20px]" : ""}`}>{a}</span>
              <span className="w-[111px] shrink-0 text-right font-bold text-[19px]">{b}</span>
              <span className="ml-[8px]">{c}</span>
              <span className="ml-auto">
                <span className="font-bold text-[19px] tracking-[0.5px]">{d}</span>
                {u && <span className="text-[22px]">{u}</span>}
              </span>
            </div>
          ))}
          <div className="h-[2px] bg-[#a80000] mt-[6px] mb-[2px]" />
          <div className="flex items-center h-[28px] pl-[2px] pr-[2px]">
            <span className="w-[102px] shrink-0 text-[23px]">净流入额</span>
            <span className="w-[66px] h-[11px] bg-[#ff3030] shrink-0" />
            <span className="ml-auto text-[#ff3030]"><span className="font-bold text-[19px]">102.4</span><span>万</span></span>
            <span className="w-[62px] text-right font-bold text-[19px] text-[#ff3030]">2%</span>
          </div>
          <div className="flex items-center h-[28px] pl-[2px] pr-[2px]">
            <span className="w-[102px] shrink-0 text-[23px]">大宗流入</span>
            <span className="w-[38px] h-[11px] bg-[#00e000] shrink-0" />
            <span className="ml-auto text-[#00e000]"><span className="font-bold text-[19px]">-59.5</span><span>万</span></span>
            <span className="w-[62px] text-right font-bold text-[19px] text-[#00e000]">-1%</span>
          </div>
          <div className="h-[2px] bg-[#a80000] mt-[3px] mb-[1px]" />
          {trades.map(([t, p, v, s, n], i) => (
            <div key={i} className="flex items-center h-[27px] pl-[2px]">
              <span className="w-[100px] shrink-0 font-bold text-[19px] text-[#c0c0c0]">{t}</span>
              <span className="w-[54px] shrink-0 text-right font-bold text-[19px] text-[#00d800]">{p}</span>
              <span className="w-[95px] shrink-0 text-right"><Wan n={v} color={s ? "text-[#c8c800]" : "text-[#c000c0]"} /></span>
              <span className={`w-[56px] shrink-0 text-center font-bold text-[19px] ${s === "B" ? "text-[#f03030]" : "text-[#00d800]"}`}>{s}</span>
              <span className="w-[22px] shrink-0 text-right font-bold text-[19px] text-[#909090]">{n}</span>
            </div>
          ))}
        </div>

        {/* tool strip */}
        <div className="w-[38px] shrink-0 flex flex-col items-center bg-[#f0f0f0]">
          {sideTop.map((ic, i) => (
            <div key={i} className="flex items-center justify-center h-[33px]">{ic}</div>
          ))}
          <div className="flex items-center h-[12px] w-[30px]"><div className="h-[2px] w-full bg-[#c0c0c0]" /></div>
          {sideMid.map((ic, i) => (
            <div key={i} className="flex items-center justify-center h-[33px]">{ic}</div>
          ))}
          <div className="flex items-center h-[12px] w-[30px]"><div className="h-[2px] w-full bg-[#c0c0c0]" /></div>
          <div className="flex items-center justify-center h-[33px]"><Box><BoxText t="F5" /></Box></div>
          <div className="flex items-center justify-center h-[33px]">
            <Box><RefreshCw x={4} y={4} width={16} height={16} color="#40b050" strokeWidth={3} /></Box>
          </div>
          {sideNums.map((n) => (
            <div key={n} className="flex items-center justify-center h-[33px] pt-[2px] text-[15px] text-[#203a8c]">{n}</div>
          ))}
          <div className="flex items-center justify-center h-[33px] w-full border-l-2 border-t-2 border-[#c8c8c8] bg-[#f8f8f8] text-[17px] text-[#203a8c]">日</div>
          {sideKinds.map((n) => (
            <div key={n} className="flex items-center justify-center h-[33px] pt-[2px] text-[17px] text-[#203a8c]">{n}</div>
          ))}
        </div>
      </div>

      {/* market status bar */}
      <div className="flex items-center h-[35px] mt-[2px] pt-[2px] text-[21px] font-bold text-[#f00000] whitespace-nowrap">
        <svg width={20} height={30} viewBox="0 0 20 30" className="ml-[2px] shrink-0">
          <rect width={20} height={30} rx={2} fill="#d8a020" />
          <rect x={4} y={6} width={12} height={18} fill="#f8e8a0" />
        </svg>
        <span className="ml-[2px] w-[55px] text-[24px] font-normal text-[#222]">上证</span>
        <span className="w-[102px]">3309.75</span>
        <span className="w-[75px]">13.66</span>
        <span className="w-[85px]">0.41%</span>
        <span className="w-[95px] text-[#111]">4587<span className="text-[24px] font-normal">亿</span></span>
        <span className="w-[54px] text-[24px] font-normal text-[#222]">深证</span>
        <span className="w-[102px]">12447.4</span>
        <span className="w-[74px]">76.42</span>
        <span className="w-[85px]">0.62%</span>
        <span className="w-[100px] text-[#111]">5915<span className="text-[24px] font-normal">亿</span></span>
        <span className="w-[51px] text-[24px] font-normal text-[#222]">中小</span>
        <span className="w-[109px]">8484.51</span>
        <span className="w-[69px]">4.56</span>
        <span className="w-[85px]">0.05%</span>
        <span className="w-[97px] text-[#111]">739.7<span className="text-[24px] font-normal">亿</span></span>
        <span className="h-full flex items-center border-l border-[#b0b0b0] pl-[3px] text-[24px] font-normal text-[#222]">总成交<span className="ml-[14px]">1</span></span>
      </div>

      {/* site watermark over the lower right corner */}
      <div className="absolute right-0 bottom-0 w-[800px] h-[81px] flex items-center bg-[#7eaad8]">
        <span className="ml-[20px] w-[290px] text-[55px] leading-none font-black text-[#180e8e] whitespace-nowrap shrink-0">公式指标网</span>
        <svg width={88} height={81} viewBox="0 0 88 81" className="ml-[10px] shrink-0">
          <path id="ringlow" d="M6 44a36 36 0 0 0 30 34" fill="none" />
          <path d="M6 40a36 36 0 0 1 72 0" fill="none" stroke="#d2644e" strokeWidth={8} />
          <path d="M78 44a36 36 0 0 1-34 35" fill="none" stroke="#e8c84a" strokeWidth={8} />
          <text fontSize={7} fill="#fff"><textPath href="#ringlow">www.9m8.cn</textPath></text>
          <circle cx={42} cy={11} r={5} fill="none" stroke="#e8c84a" strokeWidth={3} />
          <polygon points="36,16 48,16 60,34 56,54 50,80 34,80 30,54 26,34" fill="#e8c84a" />
          <path d="M34 30h18M36 40h14M34 52h18M43 24v30M38 62l-3 10M47 62l3 10" stroke="#8a7a30" strokeWidth={2.5} fill="none" />
        </svg>
        <span className="ml-[22px] text-[50px] leading-none font-bold text-white whitespace-nowrap [font-family:'DejaVu_Serif',serif]">www.9m8.cn</span>
      </div>
    </div>
  );
}
